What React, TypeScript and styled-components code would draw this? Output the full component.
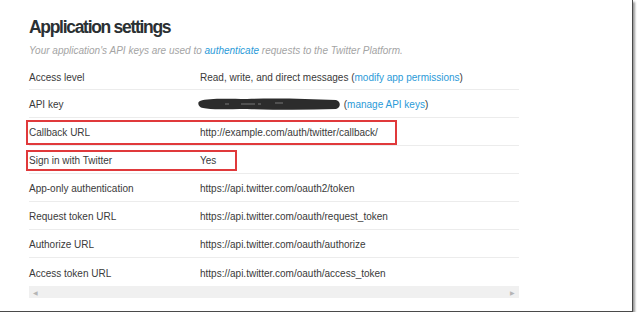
import styled, { createGlobalStyle } from "styled-components";

const GlobalStyle = createGlobalStyle`
  html, body {
    margin: 0;
    padding: 0;
    background: #ffffff;
  }
  body {
    font-family: "Liberation Sans", Arial, sans-serif;
    color: #333;
  }
`;

const Frame = styled.div`
  width: 633px;
  height: 312px;
  background: #fff;
  border-right: 1px solid #4a4a4a;
  border-bottom: 1px solid #4a4a4a;
  box-shadow: 2px 2px 2px #9a9a9a;
  padding-left: 29px;
  box-sizing: border-box;
  overflow: hidden;
`;

const Title = styled.h2`
  margin: 0;
  padding-top: 17px;
  font-size: 17.5px;
  line-height: 20px;
  font-weight: bold;
  letter-spacing: -1.3px;
  color: #2b3033;
`;

const Subtitle = styled.p`
  margin: 7px 0 0;
  font-size: 10px;
  line-height: 13px;
  font-style: italic;
  color: #a4a4a4;
`;

const Link = styled.a`
  color: #2a9ad8;
  text-decoration: none;
`;

const Table = styled.div`
  width: 490px;
  margin-top: 6px;
`;

const Row = styled.div<{ $last?: boolean }>`
  position: relative;
  display: grid;
  grid-template-columns: 171px 1fr;
  align-items: center;
  height: 27px;
  padding-top: 2px;
  box-sizing: border-box;
  border-bottom: ${(p) => (p.$last ? "none" : "1px solid #ececec")};
  font-size: 10px;
  color: #3a3a3a;
  & + & {
    height: 28px;
  }
`;

const Label = styled.div`
  white-space: nowrap;
`;

const Value = styled.div`
  display: flex;
  align-items: center;
  white-space: nowrap;
`;

const Highlight = styled.div<{ $w: number; $top: number; $h: number }>`
  position: absolute;
  left: -3px;
  top: ${(p) => p.$top}px;
  width: ${(p) => p.$w}px;
  height: ${(p) => p.$h}px;
  border: 2px solid #e0393b;
  box-sizing: border-box;
  pointer-events: none;
`;

const Scrollbar = styled.div`
  display: flex;
  justify-content: space-between;
  align-items: center;
  width: 490px;
  height: 12px;
  background: #f0f0f0;
  padding: 0 4px;
  box-sizing: border-box;
  font-size: 6px;
  color: #b5b5b5;
`;

function Redaction() {
  return (
    <svg width="144" height="13" viewBox="0 0 144 13" style={{ marginLeft: -3 }}>
      <path
        d="M3 3 C12 0 30 1 50 1 C80 0 110 1 139 2 C144 3 144 10 139 11 C110 12 80 12 50 11 C30 11 14 12 6 10 C1 9 0 4 3 3 Z"
        fill="#2c2c2c"
      />
      <path d="M28 6 h4 M44 6 h14 M61 6 h3 M78 5 h8" stroke="#8a8a8a" strokeWidth="0.8" />
    </svg>
  );
}

const rows: { label: string; value: React.ReactNode }[] = [
  {
    label: "Access level",
    value: (
      <>
        Read, write, and direct messages (<Link href="#">modify app permissions</Link>)
      </>
    ),
  },
  {
    label: "API key",
    value: (
      <>
        <Redaction />
        &nbsp;(<Link href="#">manage API keys</Link>)
      </>
    ),
  },
  { label: "Callback URL", value: "http://example.com/auth/twitter/callback/" },
  { label: "Sign in with Twitter", value: "Yes" },
  { label: "App-only authentication", value: "https://api.twitter.com/oauth2/token" },
  { label: "Request token URL", value: "https://api.twitter.com/oauth/request_token" },
  { label: "Authorize URL", value: "https://api.twitter.com/oauth/authorize" },
  { label: "Access token URL", value: "https://api.twitter.com/oauth/access_token" },
];

export default function App() {
  return (
    <>
      <GlobalStyle />
      <Frame>
        <Title>Application settings</Title>
        <Subtitle>
          Your application's API keys are used to <Link href="#">authenticate</Link> requests to the
          Twitter Platform.
        </Subtitle>
        <Table>
          {rows.map((r, i) => (
            <Row key={r.label} $last={i === rows.length - 1}>
              <Label>{r.label}</Label>
              <Value>{r.value}</Value>
              {r.label === "Callback URL" && <Highlight $w={371} $top={2} $h={25} />}
              {r.label === "Sign in with Twitter" && <Highlight $w={211} $top={4} $h={21} />}
            </Row>
          ))}
        </Table>
        <Scrollbar>
          <span>◀</span>
          <span>▶</span>
        </Scrollbar>
      </Frame>
    </>
  );
}
